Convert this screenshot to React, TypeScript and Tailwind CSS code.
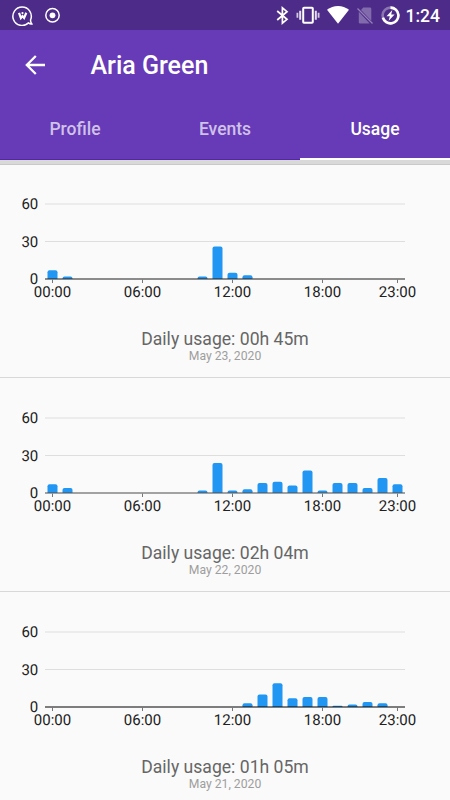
import { useState } from "react";

type Usage = {
  total: string;
  date: string;
  minutes: number[];
  axis: string;
};

const days: Usage[] = [
  {
    total: "00h 45m",
    date: "May 23, 2020",
    minutes: [7, 2, 0, 0, 0, 0, 0, 0, 0, 0, 2, 26, 5, 3, 0, 0, 0, 0, 0, 0, 0, 0, 0, 0],
    axis: "#1c1c1c",
  },
  {
    total: "02h 04m",
    date: "May 22, 2020",
    minutes: [7, 4, 0, 0, 0, 0, 0, 0, 0, 0, 2, 24, 2, 3, 8, 9, 6, 18, 2, 8, 8, 4, 12, 7],
    axis: "#4a4a4a",
  },
  {
    total: "01h 05m",
    date: "May 21, 2020",
    minutes: [0, 0, 0, 0, 0, 0, 0, 0, 0, 0, 0, 0, 0, 3, 10, 19, 7, 8, 8, 1, 2, 4, 3, 0],
    axis: "#000",
  },
];

const hours = [0, 6, 12, 18, 23];
const tabs = ["Profile", "Events", "Usage"];

const StatusBar = () => (
  <div className="flex h-[30px] items-center justify-between bg-[#4d2b88] pr-[10px] pl-3 text-white">
    <div className="flex items-center gap-3">
      <svg width="21" height="22" viewBox="0 0 21 22" fill="none" stroke="white" strokeWidth="1.5">
        <path d="M16.5 18.9A9.2 9.2 0 1 1 18.600 15.800c-.2 1.300.2 2.600 1.200 4.100-1.200.2-2.300-.2-3.300-1Z" />
        <path d="M7 8.800l1.900 5.200 1.600-1.900 1.600 1.900 2.200-5.200" strokeWidth="2.200" />
        <circle cx="10.500" cy="9.100" r="1.100" fill="white" stroke="none" />
      </svg>
      <svg width="16" height="16" viewBox="0 0 16 16" fill="none">
        <circle cx="7.500" cy="8.300" r="6.700" stroke="white" strokeWidth="1.500" />
        <circle cx="7.500" cy="8.300" r="2.900" fill="white" />
      </svg>
    </div>
    <div className="flex items-center">
      <svg width="13" height="20" viewBox="0 0 13 20" fill="none" stroke="white" strokeWidth="1.700">
        <path d="M1.200 6l9.800 8.300-4.600 3.800V2.900l4.600 3.800L1.200 15" />
      </svg>
      <svg className="ml-[7px]" width="24" height="18" viewBox="0 0 24 18" fill="none" stroke="white">
        <rect x="7.200" y="1.800" width="9.600" height="15" rx="0.800" strokeWidth="2" />
        <path d="M4.200 4.800v9M19.800 4.800v9" strokeWidth="2" opacity="0.850" />
        <path d="M1.400 6.800v5M22.600 6.800v5" strokeWidth="1.800" opacity="0.750" />
      </svg>
      <svg className="ml-[7px]" width="22" height="18" viewBox="0 0 22 18" fill="white">
        <path d="M11 17.800L0 3.800C3.200 1.300 6.900 0 11 0s7.800 1.300 11 3.800Z" />
      </svg>
      <svg className="ml-[8px]" width="16" height="19" viewBox="0 0 16 19">
        <path d="M6.200 1.500H13q1.300 0 1.300 1.300v12L4 4Z M1.800 5.800v10.400q0 1.300 1.300 1.300h9.600Z" fill="white" opacity="0.300" />
        <path d="M.5 2.500l15 15" stroke="white" strokeWidth="1.200" opacity="0.400" />
      </svg>
      <svg className="ml-[8px]" width="20" height="20" viewBox="0 0 20 20" fill="none">
        <circle cx="9.500" cy="10.500" r="7.900" stroke="white" strokeWidth="2.600" opacity="0.350" />
        <path d="M9.500 2.600a7.900 7.900 0 1 1-7.600 10" stroke="white" strokeWidth="2.600" />
        <path d="M11.300 5l-5.800 6.200h3.300l-1.100 4.600 5.900-6.300h-3.400Z" fill="white" />
      </svg>
      <span className="ml-[5px] pt-px text-[17.5px] leading-[30px] font-medium">1:24</span>
    </div>
  </div>
);

const BackIcon = () => (
  <svg width="20" height="20" viewBox="0 0 20 20" fill="none" stroke="white" strokeWidth="2.300">
    <path d="M20 10H2M10.800 1L1.800 10l9 9" />
  </svg>
);

// 15px per hour, 1.25px per minute
const Chart = ({ minutes, axis }: { minutes: number[]; axis: string }) => (
  <svg className="block" width="450" height="150" viewBox="0 0 450 150" fontSize="15" textRendering="geometricPrecision">
    {[60, 30, 0].map((value) => (
      <g key={value}>
        {value > 0 && (
          <line x1="45" x2="405" y1={115 - value * 1.25} y2={115 - value * 1.25} stroke="#dedede" strokeWidth="1.2" />
        )}
        <text x="38.300" y={120.2 - value * 1.25} textAnchor="end" fill="#212121">
          {value}
        </text>
      </g>
    ))}
    {minutes.map((value, hour) => {
      const x = 47.5 + hour * 15;
      const top = 115 - value * 1.25;
      const r = Math.min(2, value);
      return value > 0 ? (
        <path
          key={hour}
          d={`M${x} 115V${top + r}q0-${r} ${r}-${r}h${10 - 2 * r}q${r} 0 ${r} ${r}V115Z`}
          fill="#2196f3"
        />
      ) : null;
    })}
    <line x1="45" x2="405" y1="115" y2="115" stroke={axis} strokeWidth="1.200" />
    {hours.map((hour) => (
      <g key={hour}>
        <line x1={52.5 + hour * 15} x2={52.5 + hour * 15} y1="115.500" y2="119" stroke="#777" />
        <text x={52.5 + hour * 15} y="132.500" textAnchor="middle" fill="#212121">
          {String(hour).padStart(2, "0")}:00
        </text>
      </g>
    ))}
  </svg>
);

const App = () => {
  const [active, setActive] = useState("Usage");

  return (
    <div className="h-[800px] w-[450px] overflow-hidden bg-[#fafafa] font-[Roboto,sans-serif]">
      <StatusBar />
      <header className="bg-[#673ab7] text-white">
        <div className="flex h-[70px] items-center gap-[45.5px] pl-[25px]">
          <BackIcon />
          <h1 className="pt-[2px] text-[25px] font-medium">Aria Green</h1>
        </div>
        <nav className="flex h-[60px] border-b border-[#5327a7]">
          {tabs.map((tab) => (
            <button
              key={tab}
              onClick={() => setActive(tab)}
              className={
                tab === active
                  ? "-mb-px flex-1 border-b-2 border-white pt-px text-[17.5px] font-medium"
                  : "flex-1 text-[17.5px] font-medium text-white/70"
              }>
              {tab}
            </button>
          ))}
        </nav>
      </header>
      <div className="h-[4px] bg-[#d9d9d9]" />
      <div className="-mb-px h-px bg-[#c9c9c9]" />

      {days.map((day) => (
        <section key={day.date} className="h-[213.75px] border-b border-[#d8d8d8] text-center">
          <Chart minutes={day.minutes} axis={day.axis} />
          <p className="mt-[14px] text-[17.6px] leading-[22px] text-[#666]">Daily usage: {day.total}</p>
          <p className="text-[12.2px] leading-[13px] text-[#9e9e9e]">{day.date}</p>
        </section>
      ))}
    </div>
  );
};

export default App;
